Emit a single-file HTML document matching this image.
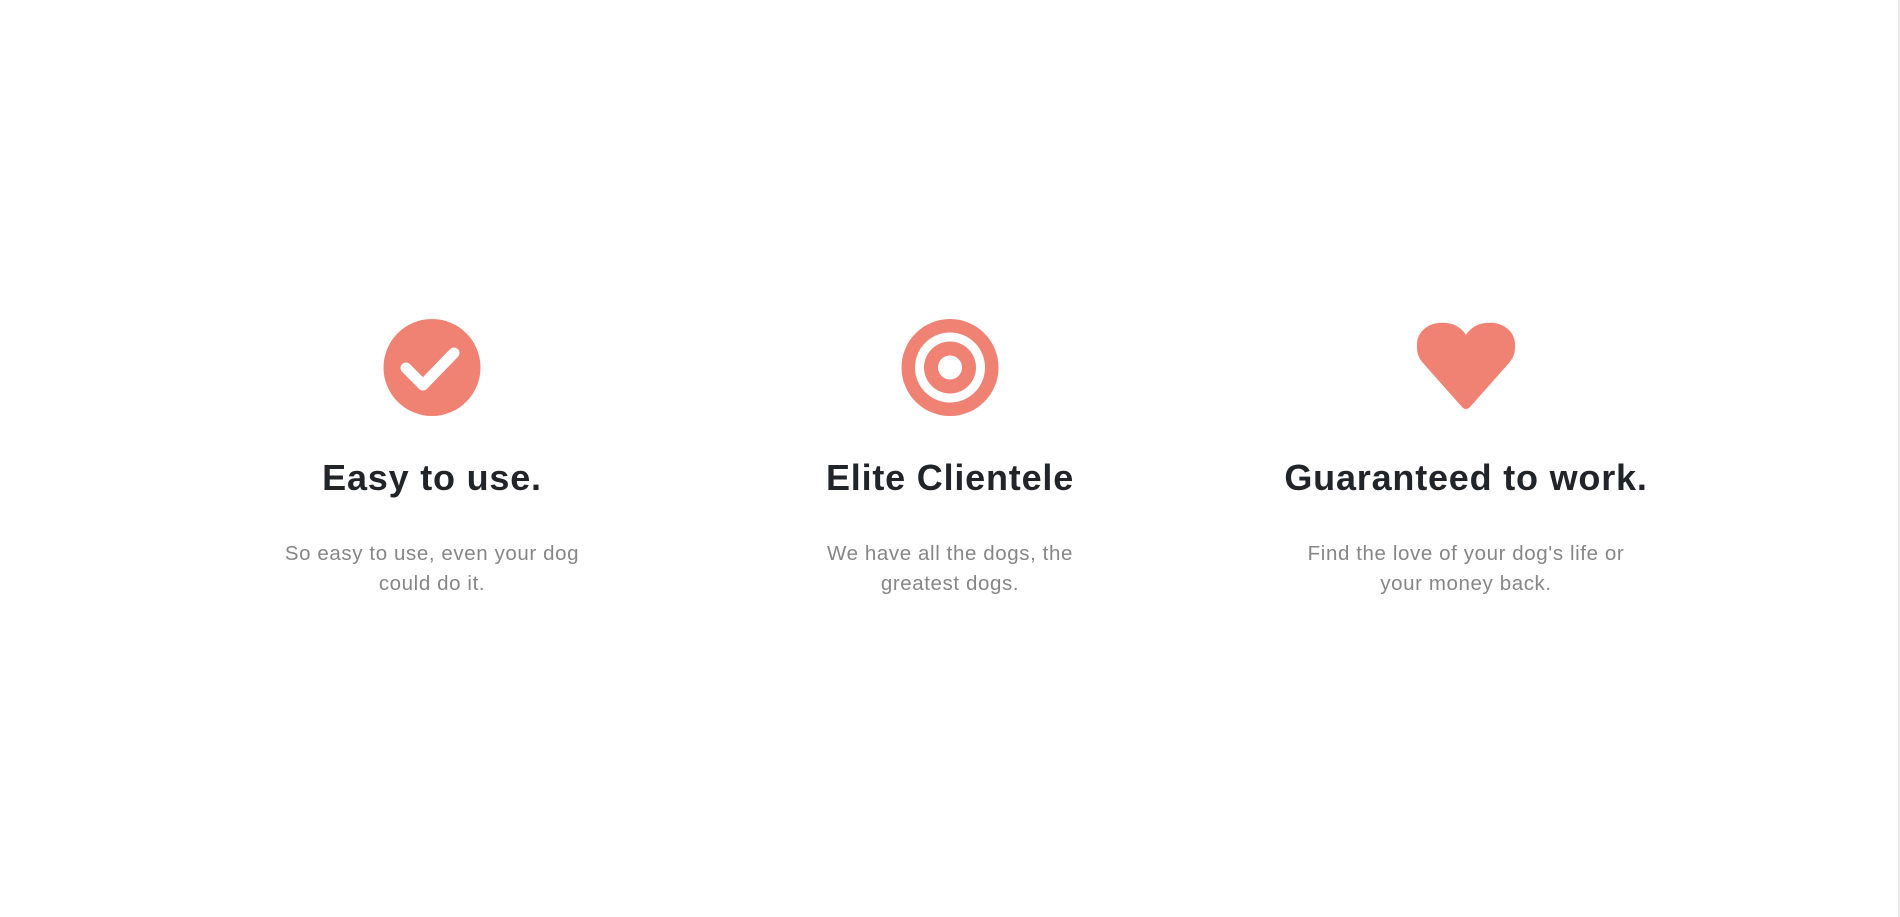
<!DOCTYPE html>
<html><head><meta charset="utf-8"><style>
html,body{margin:0;padding:0;background:#fff;width:1900px;height:917px;overflow:hidden;font-family:"Liberation Sans",sans-serif}
.col{position:absolute;top:0;width:400px;text-align:center}
.icon{position:absolute;top:319px;left:150px;width:100px;height:100px}
h3{position:absolute;top:457px;left:-50px;width:500px;margin:0;font-size:36px;font-weight:bold;color:#212529;letter-spacing:0.8px}
p{position:absolute;top:539px;left:0;width:400px;margin:0;font-size:20.5px;line-height:30px;color:#868686;letter-spacing:0.6px}
.sb{position:absolute;right:0;top:0;width:2px;height:917px;background:#e8e8e8}
</style></head><body>
<div class="col" style="left:232px">
<svg class="icon" viewBox="0 0 100 100" style="left:151px"><circle cx="49" cy="48.5" r="48.5" fill="#ef8273"/><path d="M23 49 L40 66 L71 34" stroke="#fff" stroke-width="11" fill="none" stroke-linecap="round" stroke-linejoin="round"/></svg>
<h3>Easy to use.</h3>
<p>So easy to use, even your dog<br>could do it.</p>
</div>
<div class="col" style="left:750px">
<svg class="icon" viewBox="0 0 100 100" style="left:151px"><circle cx="49" cy="48.5" r="48.5" fill="#ef8273"/><circle cx="49" cy="48.5" r="35" fill="#fff"/><circle cx="49" cy="48.5" r="26" fill="#ef8273"/><circle cx="49" cy="48.5" r="12" fill="#fff"/></svg>
<h3>Elite Clientele</h3>
<p>We have all the dogs, the<br>greatest dogs.</p>
</div>
<div class="col" style="left:1266px">
<svg class="icon" viewBox="0 0 100 100" style="left:150px;top:319px"><path d="M50,16 C57,5 68,3 78,4 C92,6 100,16 99,28 C99,35 97,39 93,44 L54,88 Q50,92 46,88 L7,44 C3,39 1,35 1,28 C0,16 8,6 22,4 C32,3 43,5 50,16 Z" fill="#ef8273"/></svg>
<h3>Guaranteed to work.</h3>
<p>Find the love of your dog's life or<br>your money back.</p>
</div>
<div class="sb"></div>
</body></html>
